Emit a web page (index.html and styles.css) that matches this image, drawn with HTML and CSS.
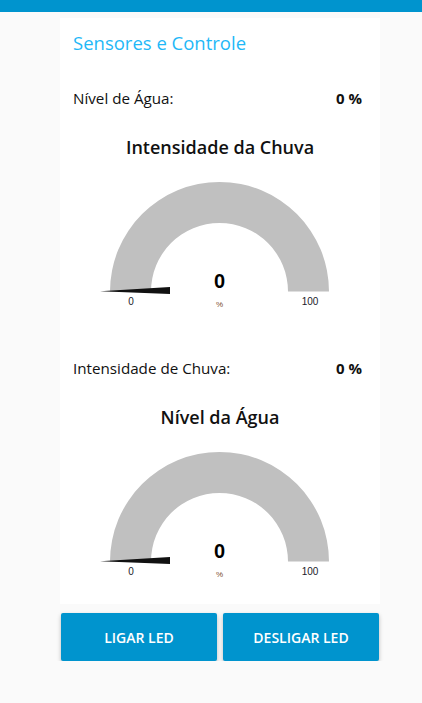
FILE: index.html
```html
<!DOCTYPE html>
<html lang="pt">
<head>
<meta charset="utf-8">
<title>Sensores e Controle</title>
<link rel="stylesheet" href="styles.css">
</head>
<body>
<header class="topbar"></header>
<main class="page">
  <section class="card">
    <h1 class="card-title">Sensores e Controle</h1>

    <div class="row row-first">
      <span class="row-label">Nível de Água:</span>
      <span class="row-value">0 %</span>
    </div>

    <h2 class="gauge-title">Intensidade da Chuva</h2>
    <svg class="gauge" width="320" height="142" viewBox="0 0 320 142">
      <path class="gauge-arc" d="M 50 121.5 A 109.5 109.5 0 0 1 269 121.5 L 228 121.5 A 68.5 68.5 0 0 0 91 121.5 Z"/>
      <polygon class="gauge-needle" points="40,121.3 110,117 110,124"/>
      <text class="gauge-value" x="159.5" y="118" text-anchor="middle">0</text>
      <text class="gauge-unit" x="159.5" y="136.5" text-anchor="middle">%</text>
      <text class="gauge-limit" x="71" y="135" text-anchor="middle">0</text>
      <text class="gauge-limit" x="250" y="135" text-anchor="middle">100</text>
    </svg>

    <div class="row row-second">
      <span class="row-label">Intensidade de Chuva:</span>
      <span class="row-value">0 %</span>
    </div>

    <h2 class="gauge-title">Nível da Água</h2>
    <svg class="gauge" width="320" height="142" viewBox="0 0 320 142">
      <path class="gauge-arc" d="M 50 121.5 A 109.5 109.5 0 0 1 269 121.5 L 228 121.5 A 68.5 68.5 0 0 0 91 121.5 Z"/>
      <polygon class="gauge-needle" points="40,121.3 110,117 110,124"/>
      <text class="gauge-value" x="159.5" y="118" text-anchor="middle">0</text>
      <text class="gauge-unit" x="159.5" y="136.5" text-anchor="middle">%</text>
      <text class="gauge-limit" x="71" y="135" text-anchor="middle">0</text>
      <text class="gauge-limit" x="250" y="135" text-anchor="middle">100</text>
    </svg>
  </section>

  <div class="actions">
    <button class="btn" type="button">LIGAR LED</button>
    <button class="btn" type="button">DESLIGAR LED</button>
  </div>
</main>
</body>
</html>
```

FILE: styles.css
```css
* { box-sizing: border-box; }

html, body {
  margin: 0;
  padding: 0;
  background: #fafafa;
  font-family: "Open Sans", "Noto Sans", sans-serif;
  color: #111;
}

.topbar {
  height: 12px;
  background: #0094ce;
}

.page {
  width: 320px;
  margin-left: 60px;
  padding-top: 6px;
}

.card {
  background: #ffffff;
  padding: 8px 18px 22px 13px;
}

.card-title {
  margin: 0;
  height: 34px;
  line-height: 34px;
  font-size: 18.5px;
  font-weight: 500;
  color: #1fb8f7;
}

.row {
  display: flex;
  justify-content: space-between;
  align-items: center;
  height: 34px;
  font-size: 15.2px;
  color: #111;
}

.row-first { margin-top: 21px; }
.row-second { margin-top: 39px; }

.row-value {
  font-size: 15px;
  font-weight: 700;
}

.gauge-title {
  margin: 17px -5px 0 0;
  height: 30px;
  line-height: 30px;
  text-align: center;
  font-size: 18px;
  font-weight: 600;
  color: #111;
}

.gauge {
  display: block;
  margin: 8px 0 0 -13px;
}

.gauge-arc { fill: #c0c0c0; }
.gauge-needle { fill: #111; }

.gauge-value {
  font-family: "Liberation Sans", Arial, sans-serif;
  font-weight: 700;
  font-size: 20px;
  fill: #000;
}

.gauge-unit {
  font-family: "Liberation Sans", Arial, sans-serif;
  font-size: 8px;
  fill: #7a4a2a;
}

.gauge-limit {
  font-family: "Liberation Sans", Arial, sans-serif;
  font-size: 10px;
  fill: #1a1a2a;
}

.actions {
  display: flex;
  gap: 6px;
  margin-top: 9px;
  padding: 0 1px;
}

.btn {
  flex: 1;
  height: 48px;
  border: none;
  border-radius: 2px;
  background: #0094ce;
  color: #ffffff;
  font-family: "Open Sans", "Noto Sans", sans-serif;
  font-size: 14px;
  font-weight: 600;
  box-shadow: 0 2px 4px rgba(0, 0, 0, 0.25);
  cursor: pointer;
}
```
